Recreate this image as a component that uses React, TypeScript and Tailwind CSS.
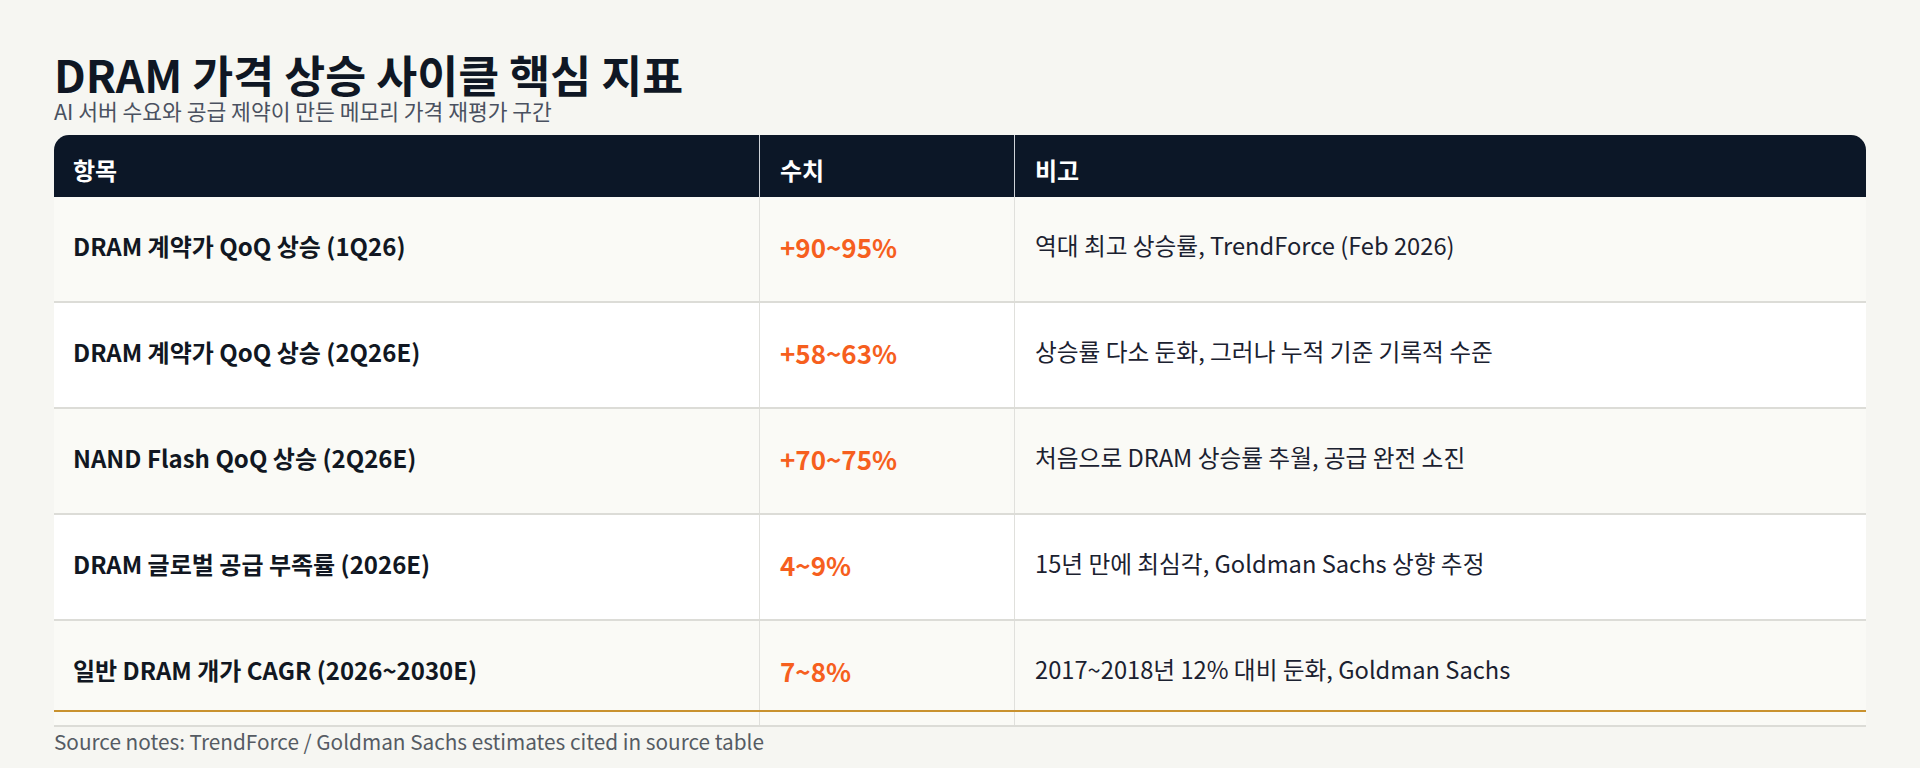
import React from 'react';

type Row = {
  item: string;
  value: string;
  note: string;
};

const rows: Row[] = [
  {
    item: 'DRAM 계약가 QoQ 상승 (1Q26)',
    value: '+90~95%',
    note: '역대 최고 상승률, TrendForce (Feb 2026)',
  },
  {
    item: 'DRAM 계약가 QoQ 상승 (2Q26E)',
    value: '+58~63%',
    note: '상승률 다소 둔화, 그러나 누적 기준 기록적 수준',
  },
  {
    item: 'NAND Flash QoQ 상승 (2Q26E)',
    value: '+70~75%',
    note: '처음으로 DRAM 상승률 추월, 공급 완전 소진',
  },
  {
    item: 'DRAM 글로벌 공급 부족률 (2026E)',
    value: '4~9%',
    note: '15년 만에 최심각, Goldman Sachs 상향 추정',
  },
  {
    item: '일반 DRAM 개가 CAGR (2026~2030E)',
    value: '7~8%',
    note: '2017~2018년 12% 대비 둔화, Goldman Sachs',
  },
];

const cols = 'grid grid-cols-[706px_255px_1fr]';

export default function App() {
  return (
    <div className="min-h-screen bg-[#f6f6f2] px-[54px] pt-[52px] font-['Noto_Sans_CJK_KR','Noto_Sans',sans-serif] text-[#161b26]">
      <h1 className="text-[44.5px] font-bold leading-none text-[#0f1724]">
        DRAM 가격 상승 사이클 핵심 지표
      </h1>
      <p className="mt-[3px] text-[21.5px] leading-none text-[#4a5160]">
        AI 서버 수요와 공급 제약이 만든 메모리 가격 재평가 구간
      </p>

      <div className="relative mt-[14px] overflow-hidden rounded-t-[15px]">
        <div className={`${cols} h-[62px] bg-[#0c1727] text-[24px] font-bold text-white`}>
          <div className="flex items-center border-r border-[#cfd3d8] pl-[19px] pt-[7px]">항목</div>
          <div className="flex items-center border-r border-[#cfd3d8] pl-[20px] pt-[7px]">수치</div>
          <div className="flex items-center pl-[20px] pt-[7px]">비고</div>
        </div>

        {rows.map((r, i) => (
          <div
            key={r.item}
            className={`${cols} h-[106px] border-b-2 border-[#dcdcd7] ${
              i % 2 === 0 ? 'bg-[#fafaf6]' : 'bg-white'
            }`}
          >
            <div className="flex items-center border-r border-[#e0e0dc] pb-[6px] pl-[19px] text-[24px] font-bold text-[#111722]">
              {r.item}
            </div>
            <div className="flex items-center border-r border-[#e0e0dc] pb-[6px] pl-[20px] text-[26px] font-bold text-[#f65f1e]">
              {r.value}
            </div>
            <div className="flex items-center pb-[6px] pl-[20px] text-[23.7px] text-[#1b2130]">
              {r.note}
            </div>
          </div>
        ))}

        {/* accent line over the last row */}
        <div className="absolute bottom-[15px] left-0 right-0 h-[2px] bg-[#c9922f]" />
      </div>

      <p className="mt-[4px] text-[20.75px] leading-none text-[#555b63]">
        Source notes: TrendForce / Goldman Sachs estimates cited in source table
      </p>
    </div>
  );
}
